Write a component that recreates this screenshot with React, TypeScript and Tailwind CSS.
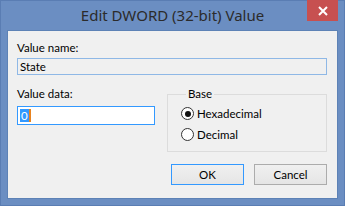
import React from 'react';

const font = { fontFamily: 'Lato, "Noto Sans", sans-serif' };
const titleFont = { fontFamily: '"Noto Sans", "Open Sans", sans-serif' };

function Radio({ label, checked }: { label: string; checked?: boolean }) {
  return (
    <div className="flex items-center h-[21px]">
      <div className="w-[13px] h-[13px] rounded-full border border-[#333333] bg-white flex items-center justify-center">
        {checked && <div className="w-[6px] h-[6px] rounded-full bg-[#111111]" />}
      </div>
      <span className="ml-[3px] text-[11.5px] leading-[16px] text-black">{label}</span>
    </div>
  );
}

export default function App() {
  return (
    <div
      className="relative w-[345px] h-[206px] bg-[#6b8ec2] border border-[#5a7db3] px-[6px] pb-[6px] flex flex-col"
      style={font}
    >
      {/* Title bar */}
      <div className="h-[29px] flex items-center justify-center">
        <span className="text-[15px] leading-[29px] text-[#2b2b2b]" style={titleFont}>
          Edit DWORD (32-bit) Value
        </span>
      </div>
      <div className="absolute top-[-1px] right-[6px] w-[31px] h-[21px] bg-[#c75050] flex items-center justify-center">
        <svg width="10" height="10" viewBox="0 0 10 10">
          <path d="M1 1 L9 9 M9 1 L1 9" stroke="white" strokeWidth="2" />
        </svg>
      </div>

      {/* Client area */}
      <div className="flex-1 border border-[#5d82b6] bg-[#f0f0f0] pl-[9px] pr-[10px] pt-[9px]">
        <div className="text-[11.5px] leading-[16px] text-black">Value name:</div>
        <div className="mt-[2px] w-[310px] h-[17px] border border-[#8fb8e6] bg-[#f0f0f0] pl-[2px] text-[11.5px] leading-[15px] text-black">
          State
        </div>

        <div className="mt-[11px] flex gap-[12px]">
          <div className="w-[138px] flex flex-col">
            <div className="text-[11.5px] leading-[16px] text-black">Value data:</div>
            <div className="mt-[4px] h-[19px] border border-[#3399ff] bg-white pl-[2px] flex items-center">
              <span className="h-[13px] bg-[#3399ff] text-white text-[11.5px] leading-[13px] px-[1px]">0</span>
              <span className="w-[2px] h-[13px] bg-[#e8831f]" />
            </div>
          </div>

          <fieldset className="w-[160px] h-[66px] border border-[#dcdcdc] pl-[13px] pr-0 pb-0">
            <legend className="ml-[5px] px-[2px] text-[11.5px] leading-[16px] text-black">Base</legend>
            <div className="pt-[1px]">
              <Radio label="Hexadecimal" checked />
              <Radio label="Decimal" />
            </div>
          </fieldset>
        </div>

        <div className="mt-[12px] flex justify-end gap-[10px]">
          <button className="w-[73px] h-[21px] border border-[#3399ff] bg-gradient-to-b from-[#f0f0f0] to-[#e5e5e5] text-[11.5px] leading-[16px] text-black">
            OK
          </button>
          <button className="w-[73px] h-[21px] border border-[#acacac] bg-gradient-to-b from-[#f0f0f0] to-[#e5e5e5] text-[11.5px] leading-[16px] text-black">
            Cancel
          </button>
        </div>
      </div>
    </div>
  );
}
